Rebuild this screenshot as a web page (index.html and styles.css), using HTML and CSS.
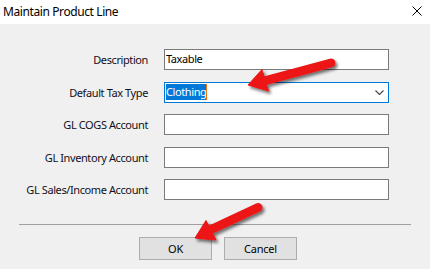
FILE: index.html
```html
<!DOCTYPE html>
<html lang="en">
<head>
    <meta charset="UTF-8">
    <title>Maintain Product Line</title>
    <link rel="stylesheet" href="styles.css">
</head>
<body>

    <div class="dialog">
        <div class="titlebar">
            <span class="title">Maintain Product Line</span>
            <svg class="close" width="10" height="10" viewBox="0 0 10 10">
                <path d="M0.5 0.5 L9.5 9.5 M9.5 0.5 L0.5 9.5" stroke="#000" stroke-width="1"/>
            </svg>
        </div>

        <div class="form">
            <label>Description</label>
            <div class="field">Taxable</div>

            <label>Default Tax Type</label>
            <div class="field combo">
                <span class="selected">Clothing</span><span class="caret"></span>
                <svg class="chevron" width="9" height="5" viewBox="0 0 9 5">
                    <path d="M0.5 0.5 L4.5 4.5 L8.5 0.5" fill="none" stroke="#444" stroke-width="1.1"/>
                </svg>
            </div>

            <label>GL COGS Account</label>
            <div class="field"></div>

            <label>GL Inventory Account</label>
            <div class="field"></div>

            <label>GL Sales/Income Account</label>
            <div class="field"></div>
        </div>

        <div class="separator"></div>

        <div class="buttons">
            <button>OK</button>
            <button>Cancel</button>
        </div>

        <!-- red callout arrows drawn over the dialog -->
        <svg class="arrows" width="430" height="269" viewBox="0 0 430 269">
            <defs>
                <filter id="shadow" x="-20%" y="-20%" width="140%" height="140%">
                    <feDropShadow dx="2" dy="2.5" stdDeviation="1.6" flood-color="#000" flood-opacity="0.55"/>
                </filter>
            </defs>
            <g filter="url(#shadow)" fill="#ec1414" stroke="#ec1414">
                <line x1="331" y1="63" x2="264" y2="81" stroke-width="9" stroke-linecap="round"/>
                <polygon points="248,85 262,69.5 268.5,91" stroke-width="1" stroke-linejoin="round"/>
                <line x1="258" y1="207.5" x2="210" y2="230" stroke-width="9" stroke-linecap="round"/>
                <polygon points="195,238 206,220.5 216,240" stroke-width="1" stroke-linejoin="round"/>
            </g>
        </svg>
    </div>

</body>
</html>
```

FILE: styles.css
```css
body {
    margin: 0;
    background: #f0f0f0;
    font-family: "Noto Sans", "Open Sans", sans-serif;
    font-size: 11px;
    letter-spacing: -0.4px;
    color: #000;
}
.dialog {
    position: relative;
    width: 430px;
    height: 269px;
    overflow: hidden;
}
.titlebar {
    height: 24px;
    background: #fff;
    display: flex;
    align-items: center;
    justify-content: space-between;
    padding: 0 8px 0 3px;
}
.title {
    font-size: 12px;
    margin-top: -2px;
}
.close {
    margin-top: -2px;
}
.form {
    display: grid;
    grid-template-columns: 148px 225px;
    grid-auto-rows: 21px;
    column-gap: 16px;
    row-gap: 11.5px;
    margin-top: 25px;
}
.form label {
    text-align: right;
    line-height: 21px;
    color: #111122;
}
.field {
    box-sizing: border-box;
    background: #fff;
    border: 1px solid #7a7a7a;
    line-height: 18px;
    padding-left: 1px;
}
.combo {
    position: relative;
    border-color: #0078d7;
    display: flex;
    align-items: center;
}
.selected {
    background: #0078d7;
    color: #fff;
    line-height: 16px;
}
.caret {
    width: 1px;
    height: 16px;
    background: #f07010;
}
.chevron {
    position: absolute;
    right: 4px;
    top: 7px;
}
.separator {
    height: 1px;
    background: #a0a0a0;
    margin: 24px 19px 0 19px;
}
.buttons {
    display: flex;
    gap: 12px;
    padding-left: 139px;
    margin-top: 12px;
}
button {
    width: 73px;
    height: 23px;
    background: #e1e1e1;
    border: 1px solid #adadad;
    font-family: "Noto Sans", "Open Sans", sans-serif;
    font-size: 11px;
    letter-spacing: -0.2px;
    color: #000;
    padding: 0;
}
.arrows {
    position: absolute;
    left: 0;
    top: 0;
}
```
